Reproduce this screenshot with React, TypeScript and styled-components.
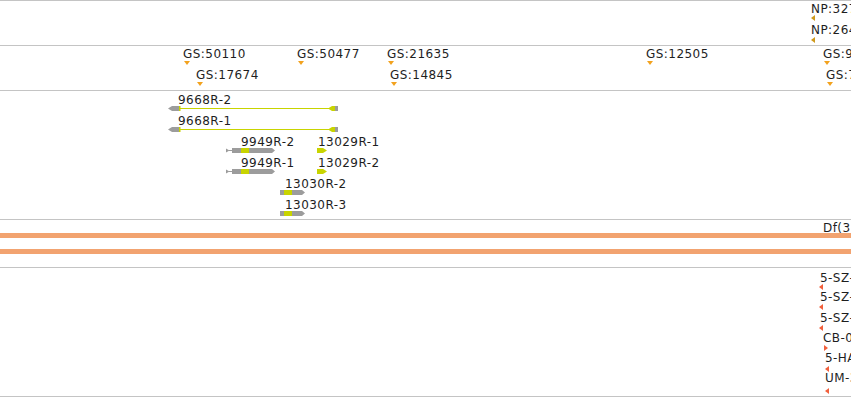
import React from "react";
import styled, { createGlobalStyle, css } from "styled-components";

const GlobalStyle = createGlobalStyle`
  html, body {
    margin: 0;
    padding: 0;
    background: #fff;
    overflow: hidden;
  }
  body {
    font-family: "DejaVu Sans", "Liberation Sans", sans-serif;
  }
`;

const GRAY = "#9c9c9c";
const LIME = "#c8d400";

const Viewer = styled.div`
  width: 851px;
  display: flex;
  flex-direction: column;
  border-top: 1px solid #c4c4c4;
`;

const Track = styled.div<{ $height: number }>`
  position: relative;
  height: ${({ $height }) => $height}px;
  border-bottom: 1px solid #c4c4c4;
  overflow: hidden;
`;

const DeletionTrack = styled(Track)`
  display: flex;
  flex-direction: column;
  gap: 11px;
  padding-top: 13px;
  box-sizing: border-box;
  height: 48px;
`;

const DeletionBar = styled.div`
  height: 5px;
  background: #f2a370;
`;

type Pos = { $x: number; $y: number };

const Label = styled.span.attrs<Pos>(({ $x, $y }) => ({
  style: { left: $x, top: $y },
}))`
  position: absolute;
  font-size: 12px;
  line-height: 14px;
  letter-spacing: 0.45px;
  color: #1e1e1e;
  white-space: nowrap;
`;

type Dir = "left" | "right" | "down";

const Marker = styled.span.attrs<Pos & { $dir: Dir; $color: string }>(
  ({ $x, $y }) => ({ style: { left: $x, top: $y } })
)`
  position: absolute;
  width: 0;
  height: 0;
  ${({ $dir, $color }) =>
    $dir === "down"
      ? css`
          border-left: 3px solid transparent;
          border-right: 3px solid transparent;
          border-top: 4px solid ${$color};
        `
      : $dir === "left"
      ? css`
          border-top: 3px solid transparent;
          border-bottom: 3px solid transparent;
          border-right: 4px solid ${$color};
        `
      : css`
          border-top: 3px solid transparent;
          border-bottom: 3px solid transparent;
          border-left: 4px solid ${$color};
        `}
`;

const GeneBox = styled.div.attrs<Pos>(({ $x, $y }) => ({
  style: { left: $x, top: $y },
}))`
  position: absolute;
  height: 5px;
  line-height: 0;

  svg {
    display: block;
  }
`;

type GeneKind = "9668" | "9949" | "13029" | "13030";

const GeneGlyph = ({ kind }: { kind: GeneKind }) => {
  if (kind === "9668")
    return (
      <svg width="171" height="5" viewBox="0 0 171 5">
        <polygon points="0,2.5 4,0 11,0 11,5 4,5" fill={GRAY} />
        <line x1="11" y1="2.5" x2="161" y2="2.5" stroke={LIME} strokeWidth="1" />
        <rect x="11" y="0" width="1.5" height="5" fill={LIME} />
        <polygon points="160,2.5 164,0 167,0 167,5 164,5" fill={LIME} />
        <rect x="167" y="0" width="3" height="5" fill={GRAY} />
      </svg>
    );
  if (kind === "9949")
    return (
      <svg width="50" height="5" viewBox="0 0 50 5">
        <polygon points="0,0.5 3.5,2.5 0,4.5" fill={GRAY} />
        <line x1="3" y1="2.5" x2="7" y2="2.5" stroke={GRAY} strokeWidth="1" />
        <rect x="6" y="0" width="9" height="5" fill={GRAY} />
        <rect x="15" y="0" width="8" height="5" fill={LIME} />
        <polygon points="23,0 46,0 49,2.5 46,5 23,5" fill={GRAY} />
      </svg>
    );
  if (kind === "13029")
    return (
      <svg width="11" height="5" viewBox="0 0 11 5">
        <polygon points="0,0 6,0 10,2.5 6,5 0,5" fill={LIME} />
      </svg>
    );
  return (
    <svg width="26" height="5" viewBox="0 0 26 5">
      <rect x="0" y="0" width="4" height="5" fill={GRAY} />
      <rect x="4" y="0" width="8" height="5" fill={LIME} />
      <polygon points="12,0 22,0 25,2.5 22,5 12,5" fill={GRAY} />
    </svg>
  );
};

type Feature = {
  text: string;
  x: number;
  y: number;
  mx: number;
  my: number;
  dir: Dir;
};

const proteins: Feature[] = [
  { text: "NP:3271856", x: 811, y: 1, mx: 811, my: 14, dir: "left" },
  { text: "NP:2645310", x: 811, y: 22, mx: 811, my: 36, dir: "left" },
];

const transcripts: Feature[] = [
  { text: "GS:50110", x: 183, y: 1, mx: 184, my: 15, dir: "down" },
  { text: "GS:50477", x: 297, y: 1, mx: 298, my: 15, dir: "down" },
  { text: "GS:21635", x: 387, y: 1, mx: 388, my: 15, dir: "down" },
  { text: "GS:12505", x: 646, y: 1, mx: 647, my: 15, dir: "down" },
  { text: "GS:9873", x: 823, y: 1, mx: 824, my: 15, dir: "down" },
  { text: "GS:17674", x: 196, y: 22, mx: 197, my: 36, dir: "down" },
  { text: "GS:14845", x: 390, y: 22, mx: 391, my: 36, dir: "down" },
  { text: "GS:7428", x: 826, y: 22, mx: 827, my: 36, dir: "down" },
];

const strains: Feature[] = [
  { text: "5-SZ-3541", x: 820, y: 3, mx: 819, my: 16, dir: "left" },
  { text: "5-SZ-3387", x: 820, y: 22, mx: 819, my: 36, dir: "left" },
  { text: "5-SZ-3126", x: 820, y: 43, mx: 819, my: 57, dir: "left" },
  { text: "CB-0713-3", x: 823, y: 63, mx: 824, my: 77, dir: "right" },
  { text: "5-HA-2461", x: 825, y: 83, mx: 825, my: 98, dir: "left" },
  { text: "UM-3047", x: 825, y: 103, mx: 825, my: 120, dir: "left" },
];

const genes: { name: string; kind: GeneKind; lx: number; gx: number; row: number }[] = [
  { name: "9668R-2", kind: "9668", lx: 178, gx: 168, row: 0 },
  { name: "9668R-1", kind: "9668", lx: 178, gx: 168, row: 1 },
  { name: "9949R-2", kind: "9949", lx: 241, gx: 226, row: 2 },
  { name: "13029R-1", kind: "13029", lx: 318, gx: 317, row: 2 },
  { name: "9949R-1", kind: "9949", lx: 241, gx: 226, row: 3 },
  { name: "13029R-2", kind: "13029", lx: 318, gx: 317, row: 3 },
  { name: "13030R-2", kind: "13030", lx: 285, gx: 280, row: 4 },
  { name: "13030R-3", kind: "13030", lx: 285, gx: 280, row: 5 },
];

const FeatureList = ({ items, color }: { items: Feature[]; color: string }) => (
  <>
    {items.map((f) => (
      <React.Fragment key={f.text}>
        <Label $x={f.x} $y={f.y}>
          {f.text}
        </Label>
        <Marker $x={f.mx} $y={f.my} $dir={f.dir} $color={color} />
      </React.Fragment>
    ))}
  </>
);

export default function App() {
  return (
    <>
      <GlobalStyle />
      <Viewer>
        <Track $height={44}>
          <FeatureList items={proteins} color="#cf9a1c" />
        </Track>
        <Track $height={44}>
          <FeatureList items={transcripts} color="#f2a21e" />
        </Track>
        <Track $height={128}>
          {genes.map((g) => (
            <React.Fragment key={g.name}>
              <Label $x={g.lx} $y={2 + g.row * 21}>
                {g.name}
              </Label>
              <GeneBox $x={g.gx} $y={15 + g.row * 21}>
                <GeneGlyph kind={g.kind} />
              </GeneBox>
            </React.Fragment>
          ))}
        </Track>
        <DeletionTrack $height={48}>
          <Label $x={823} $y={1}>
            Df(3L)ED4408
          </Label>
          <DeletionBar />
          <DeletionBar />
        </DeletionTrack>
        <Track $height={128}>
          <FeatureList items={strains} color="#f2603c" />
        </Track>
      </Viewer>
    </>
  );
}
